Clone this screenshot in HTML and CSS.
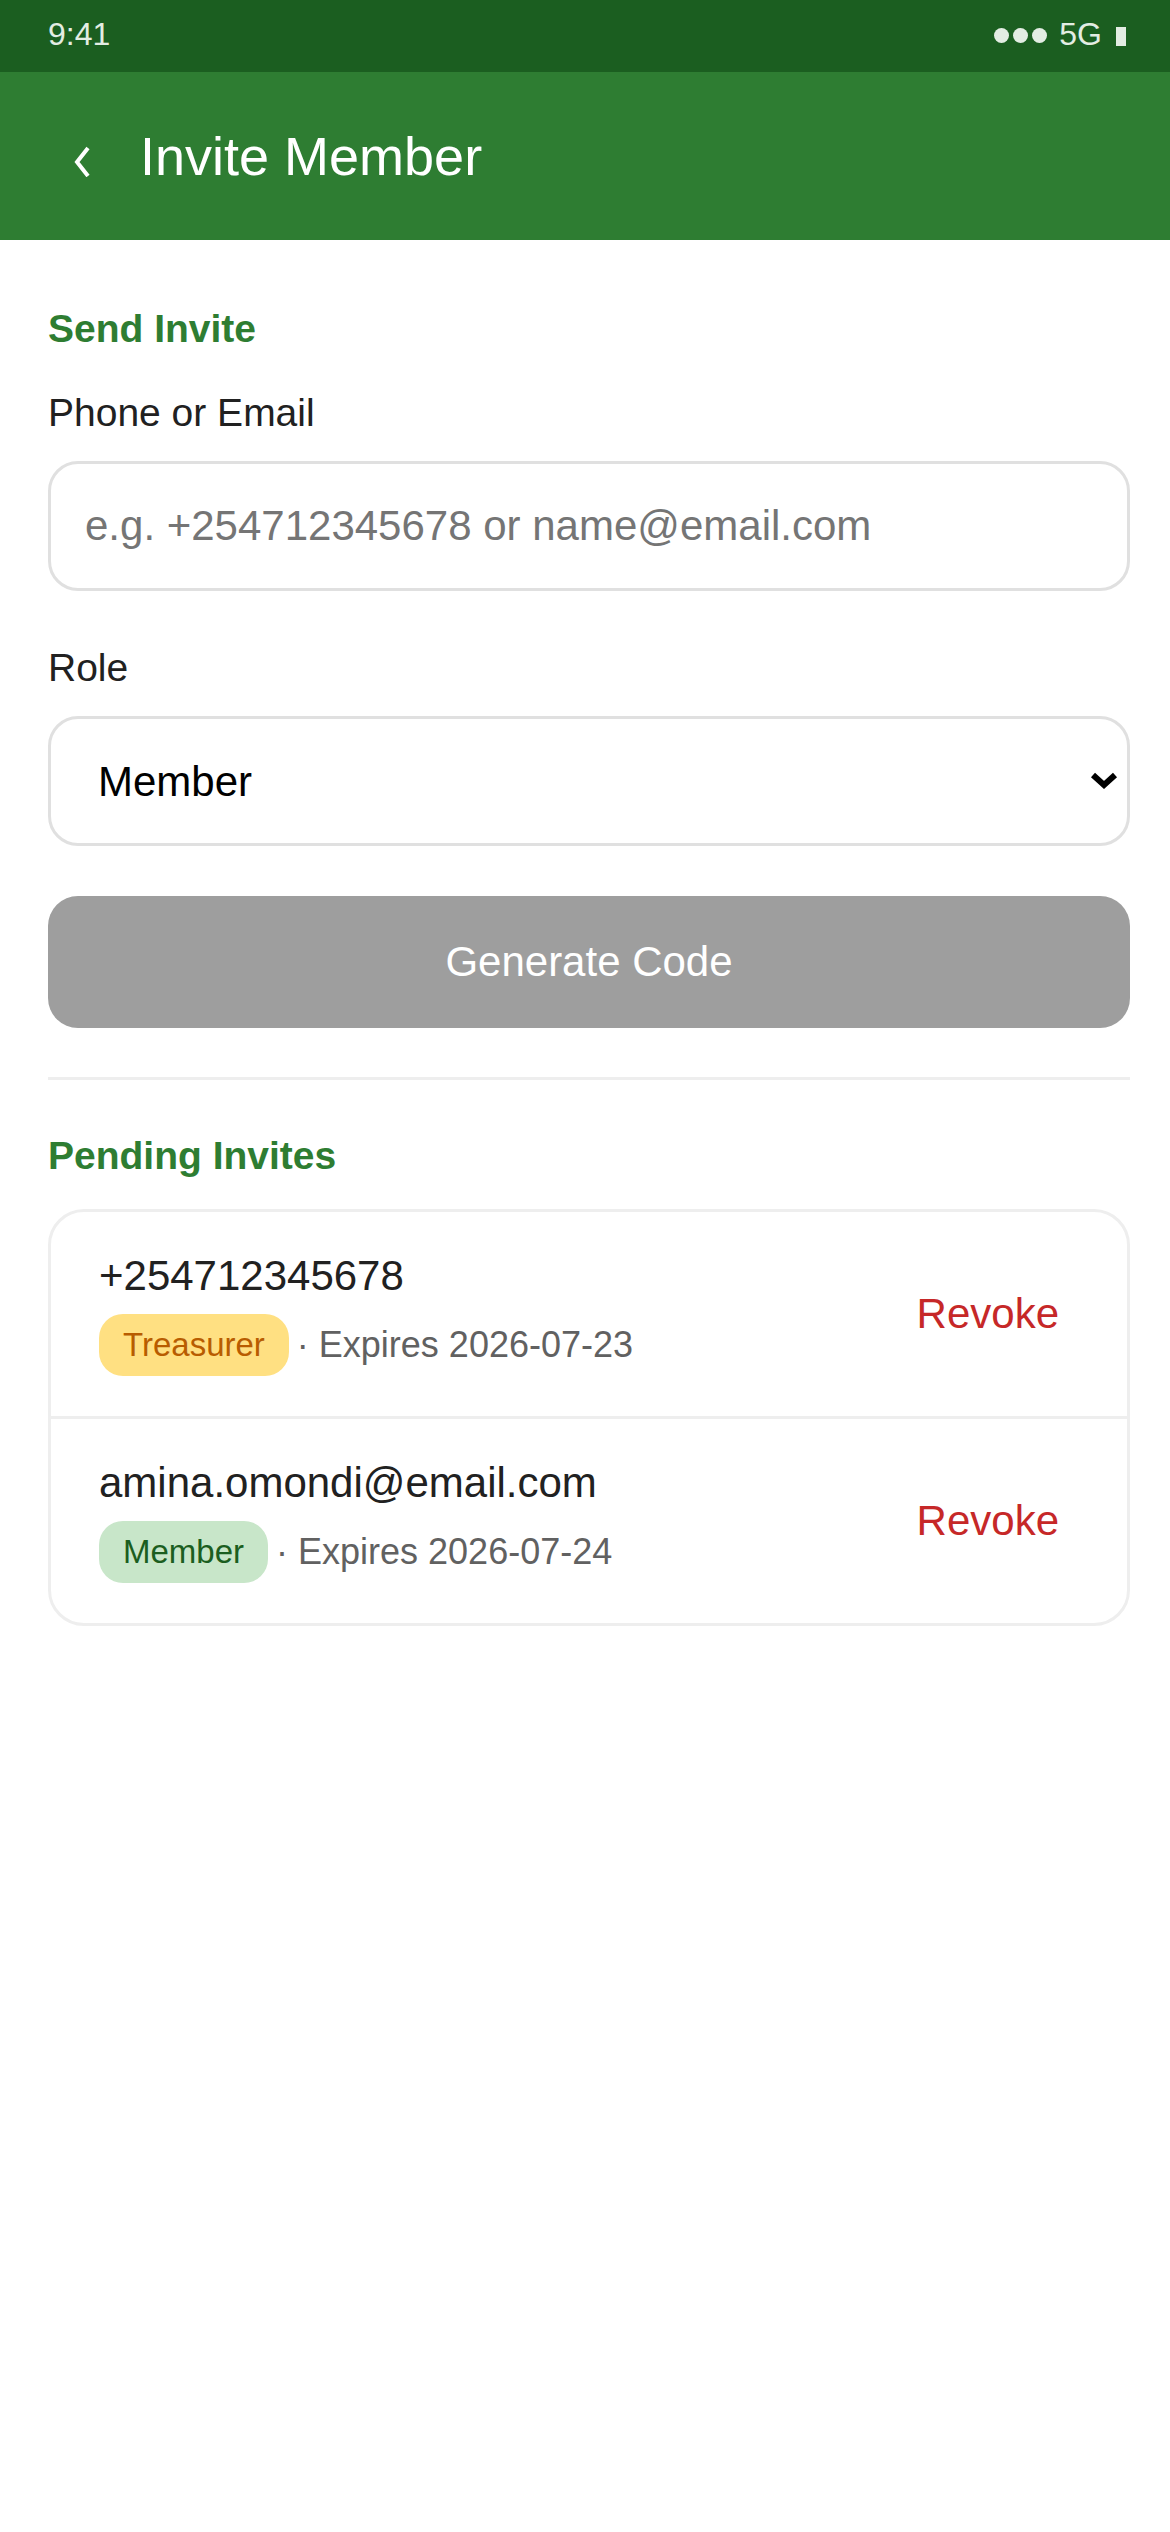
FILE: index.html
```html
<!DOCTYPE html>
<html lang="en">
<head>
    <meta charset="UTF-8">
    <meta name="viewport" content="width=device-width, initial-scale=1.0">
    <title>Invite Member</title>
    <link rel="stylesheet" href="styles.css">
</head>
<body>
    <div class="statusBar">
        <span class="time">9:41</span>
        <div class="statusIcons">
            <span class="dot"></span>
            <span class="dot"></span>
            <span class="dot"></span>
            <span class="network">5G</span>
            <span class="battery"></span>
        </div>
    </div>

    <header class="appBar">
        <button class="backBtn" aria-label="Back">
            <svg width="20" height="32" viewBox="0 0 20 32">
                <polyline points="16,3 5,17 16,31" fill="none" stroke="#ffffff" stroke-width="4"/>
            </svg>
        </button>
        <h1>Invite Member</h1>
    </header>

    <main class="content">
        <h2 class="sectionTitle">Send Invite</h2>

        <label class="fieldLabel" for="contact">Phone or Email</label>
        <input class="textField" type="text" id="contact" placeholder="e.g. +254712345678 or name@email.com">

        <label class="fieldLabel" for="role">Role</label>
        <div class="selectWrap">
            <select class="selectField" id="role">
                <option>Member</option>
                <option>Treasurer</option>
                <option>Secretary</option>
            </select>
            <svg class="selectArrow" width="28" height="18" viewBox="0 0 28 18">
                <polyline points="3,3 14,13 25,3" fill="none" stroke="#000000" stroke-width="6"/>
            </svg>
        </div>

        <button class="generateBtn" disabled>Generate Code</button>

        <hr class="divider">

        <h2 class="sectionTitle pendingTitle">Pending Invites</h2>

        <div class="inviteList">
            <div class="inviteRow">
                <div class="inviteInfo">
                    <p class="inviteContact">+254712345678</p>
                    <div class="inviteMeta">
                        <span class="badge treasurer">Treasurer</span>
                        <span class="expires">· Expires 2026-07-23</span>
                    </div>
                </div>
                <button class="revokeBtn">Revoke</button>
            </div>
            <div class="inviteRow">
                <div class="inviteInfo">
                    <p class="inviteContact">amina.omondi@email.com</p>
                    <div class="inviteMeta">
                        <span class="badge member">Member</span>
                        <span class="expires">· Expires 2026-07-24</span>
                    </div>
                </div>
                <button class="revokeBtn">Revoke</button>
            </div>
        </div>
    </main>
</body>
</html>
```

FILE: styles.css
```css
* {
    box-sizing: border-box;
}

body {
    margin: 0;
    background-color: #ffffff;
    font-family: "Liberation Sans", Arial, sans-serif;
    color: #212121;
}

/* ---------- status bar ---------- */

.statusBar {
    height: 72px;
    display: flex;
    justify-content: space-between;
    align-items: center;
    padding: 0 44px 4px 48px;
    background-color: #1b5e20;
    color: #e3ede3;
    font-size: 32px;
    line-height: 36px;
}

.statusIcons {
    display: flex;
    align-items: center;
}

.dot {
    width: 15px;
    height: 15px;
    margin: 3px 4px 0 0;
    border-radius: 50%;
    background-color: #e3ede3;
}

.network {
    margin-left: 8px;
}

.battery {
    width: 10px;
    height: 19px;
    margin: 5px 0 0 14px;
    background-color: #e3ede3;
}

/* ---------- app bar ---------- */

.appBar {
    height: 168px;
    display: flex;
    align-items: center;
    padding-left: 72px;
    background-color: #2e7d32;
}

.backBtn {
    width: 20px;
    height: 32px;
    margin-top: 10px;
    padding: 0;
    border: none;
    background: none;
}

.backBtn svg {
    display: block;
}

.appBar h1 {
    margin: 0 0 0 48px;
    font-size: 54px;
    font-weight: normal;
    color: #ffffff;
}

/* ---------- form ---------- */

.content {
    padding: 66px 40px 0 48px;
}

.sectionTitle {
    margin: 0 0 39px;
    font-size: 39px;
    line-height: 45px;
    font-weight: bold;
    color: #2e7d32;
}

.pendingTitle {
    margin-bottom: 31px;
}

.fieldLabel {
    display: block;
    margin-bottom: 26px;
    font-size: 39px;
    line-height: 45px;
}

.textField {
    display: block;
    width: 100%;
    height: 130px;
    margin-bottom: 54px;
    padding: 0 34px;
    border: 3px solid #e0e0e0;
    border-radius: 30px;
    font-family: inherit;
    font-size: 42px;
    color: #212121;
    outline: none;
}

.textField::placeholder {
    color: #757575;
}

.selectWrap {
    position: relative;
    margin-bottom: 50px;
}

.selectField {
    display: block;
    width: 100%;
    height: 130px;
    padding: 0 60px 0 47px;
    border: 3px solid #e0e0e0;
    border-radius: 30px;
    background-color: #ffffff;
    font-family: inherit;
    font-size: 42px;
    color: #000000;
    appearance: none;
    outline: none;
}

.selectArrow {
    position: absolute;
    right: 12px;
    top: 50%;
    transform: translateY(-50%);
}

.generateBtn {
    display: block;
    width: 100%;
    height: 132px;
    margin-bottom: 49px;
    border: none;
    border-radius: 30px;
    background-color: #9e9e9e;
    font-family: inherit;
    font-size: 42px;
    color: #ffffff;
}

.divider {
    height: 3px;
    margin: 0 0 53px;
    border: none;
    background-color: #eeeeee;
}

/* ---------- pending invites ---------- */

.inviteList {
    border: 3px solid #eeeeee;
    border-radius: 36px;
    overflow: hidden;
}

.inviteRow {
    display: flex;
    justify-content: space-between;
    align-items: center;
    padding: 40px 48px;
}

.inviteRow + .inviteRow {
    border-top: 3px solid #eeeeee;
}

.inviteContact {
    margin: 0;
    font-size: 42px;
    line-height: 48px;
    color: #212121;
}

.inviteMeta {
    display: flex;
    align-items: center;
    gap: 8px;
    margin-top: 14px;
}

.badge {
    padding: 12px 24px;
    border-radius: 24px;
    font-size: 33px;
    line-height: 38px;
}

.badge.treasurer {
    background-color: #ffe082;
    color: #b85c00;
}

.badge.member {
    background-color: #c8e6c9;
    color: #1b5e20;
}

.expires {
    font-size: 36px;
    color: #616161;
}

.revokeBtn {
    padding: 12px 20px;
    border: none;
    background: none;
    font-family: inherit;
    font-size: 42px;
    color: #c62828;
}
```
